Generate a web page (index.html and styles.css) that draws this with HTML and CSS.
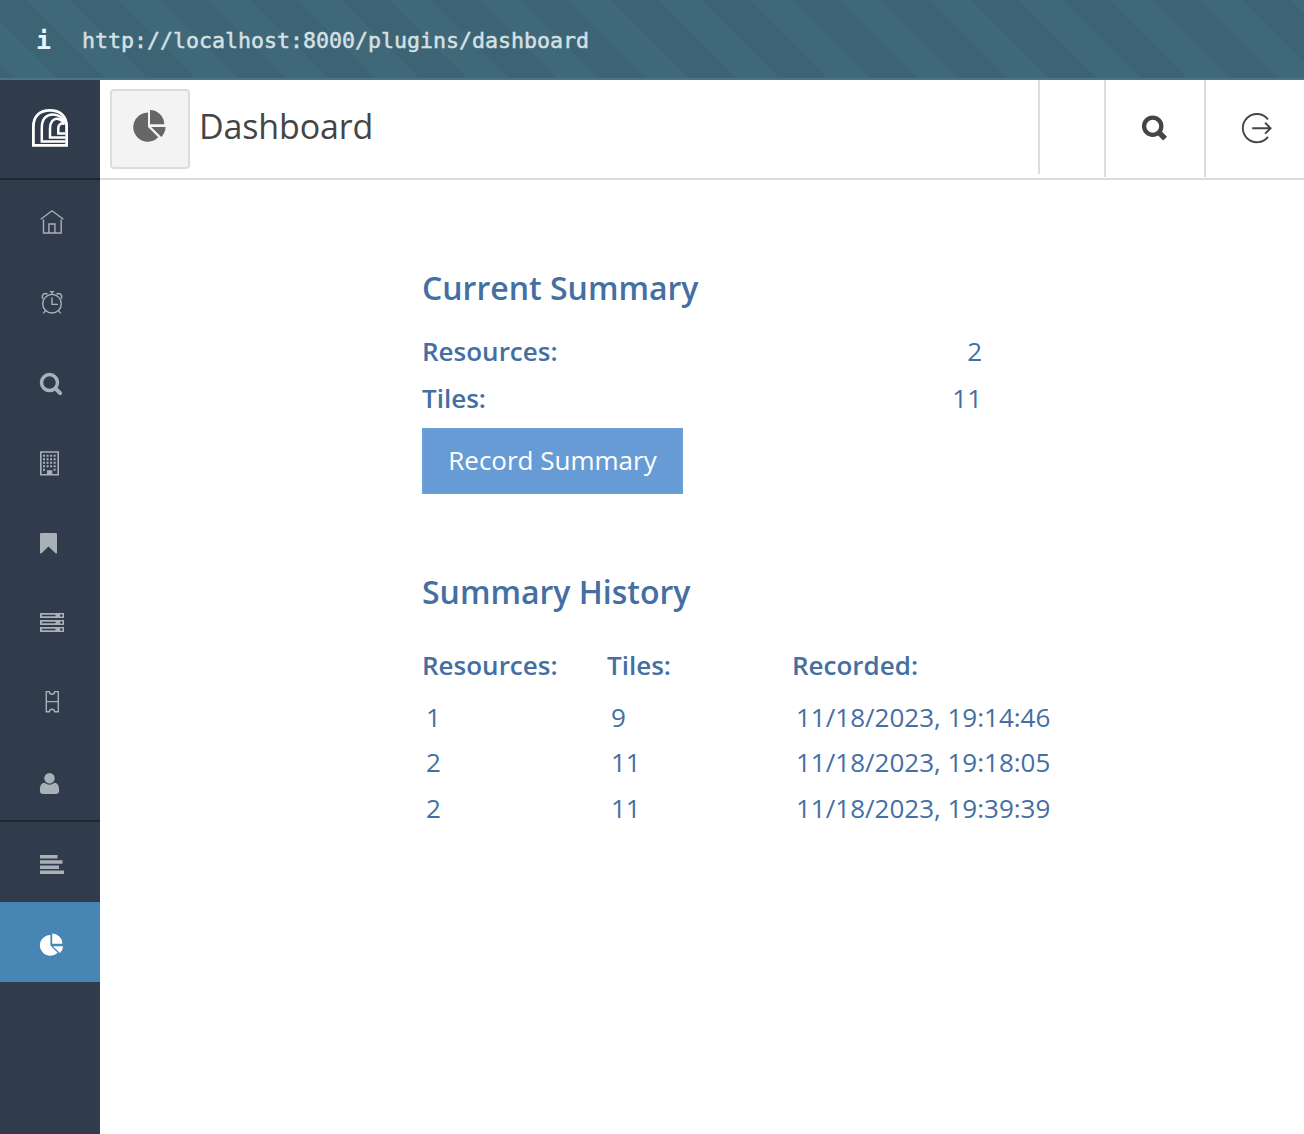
FILE: index.html
```html
<!DOCTYPE html>
<html lang="en">
<head>
<meta charset="utf-8">
<title>Dashboard</title>
<link rel="stylesheet" href="styles.css">
</head>
<body>
<div class="address-bar"><span class="address-info">i</span><span class="address-url">http://localhost:8000/plugins/dashboard</span></div>
<div class="app">
  <aside class="sidebar">
    <a class="logo">
      <svg width="40" height="42" viewBox="0 0 40 42" fill="none" stroke="#fff">
        <path stroke-width="2.8" d="M3.4 38.4V19.500C3.4 9 10 3.4 20 3.4S36.600 9 36.600 19.500V38.4Z"/>
        <path stroke-width="2.5" d="M35 34.600H11.800V20.500C11.800 12 16.500 7.200 23 7.400C28.500 7.600 32.500 10.500 34.800 15"/>
        <path stroke-width="2.5" d="M35 30.500H20V21.500C20 15 23.500 11.500 27 11.700C30.500 12 33 14 34.500 17.500"/>
        <path stroke-width="2.5" d="M35 26.400H28.300V21.500C28.300 18 30 16.200 33.800 16.600"/>
      </svg>
    </a>
    <nav class="nav">
      <a class="nav-item"><svg class="line" viewBox="0 0 32 32"><path d="M6.8 13.3 18 4.800l11.4 8.5M9.5 13.6V27H27.2V13.6M14.9 26.800V18h6v8.800"/></svg></a>
      <a class="nav-item"><svg class="line" viewBox="0 0 32 32"><circle cx="18" cy="17.7" r="9.3"/><path d="M18 11.5V18.4h6M15.8 5.6h4.4M18 5.6v2.7M8.8 13C7.2 8.8 10 6.2 13.7 8.2M27.2 13C28.8 8.8 26 6.2 22.3 8.2M11.6 24.6 9.4 27.2M24.4 24.6l2.2 2.6"/></svg></a>
      <a class="nav-item"><svg viewBox="0 0 32 32" fill="none" stroke="currentColor"><circle cx="15.5" cy="16.6" r="8" stroke-width="3.5"/><path stroke-width="4" stroke-linecap="round" d="m21.5 22.6 4.6 4.6"/></svg></a>
      <a class="nav-item"><svg viewBox="0 0 32 32"><path fill="none" stroke="currentColor" stroke-width="1.6" d="M6.8 6h17.4v22.8H6.8z"/><path fill="none" stroke="currentColor" stroke-width="2" stroke-dasharray="2 1.55" d="M9 9.8h14M9 13.3h14M9 16.8h14M9 20.3h14"/><path fill="currentColor" d="M9 22.8h2v2H9zM19.6 22.8h2v2h-2zM13 24.2h5.3V29H13z"/></svg></a>
      <a class="nav-item"><svg viewBox="0 0 32 32"><path fill="currentColor" d="M7.2 7h14.6Q23 7 23 8.2V27q-.6 1-1.5.2l-7-6.6-7 6.6Q6.6 28 6 27V8.2Q6 7 7.2 7z"/></svg></a>
      <a class="nav-item"><svg viewBox="0 0 32 32"><path fill="currentColor" d="M6 7h24v5H6zM6 14h24v5H6zM6 21h24v5H6z"/><path class="cutout" d="M8 9.5h13.5M8 16.5h13.5M8 23.5h13.5M26 9.5h2.6M26 16.5h2.6M26 23.5h2.6M27.3 8.2v2.6M27.3 15.2v2.6M27.3 22.2v2.6"/></svg></a>
      <a class="nav-item"><svg class="line" viewBox="0 0 32 32"><path d="M12.3 5.6h3q.4 2.6 2.7 2.6t2.7-2.6h3.6v20.2h-3.6Q20.300 23.200 18 23.200T15.300 25.800h-3zM12.300 15.600H24.300"/></svg></a>
      <a class="nav-item"><svg viewBox="0 0 32 32"><circle cx="15.500" cy="12.300" r="5.200" fill="currentColor"/><path fill="currentColor" d="M10.500 16.700Q15.500 20.800 20.500 16.700C24 17 25.100 20 25.100 24.800Q25 28 21.500 28h-12Q6 28 5.900 24.800C5.900 20 7 17 10.500 16.700z"/></svg></a>
      <a class="nav-item nav-item-section"><svg viewBox="0 0 32 32"><path fill="currentColor" d="M6 9h17.500v3.500H6zM6 14.200h22.500v3.500H6zM6 19.400h19v3.500H6zM6 24.500h24V28H6z"/></svg></a>
      <a class="nav-item nav-item-active"><svg viewBox="0 0 32 32"><path fill="currentColor" d="M16.400 9v10.400l7.300 7.300A10.400 10.400 0 1 1 16.400 9zM18.200 7.500A10.200 10.200 0 0 1 28.400 17.700H18.200zM18.900 20.200H29.100Q29 24 26 27.100z"/></svg></a>
    </nav>
  </aside>
  <main class="main">
    <header class="header">
      <div class="title-icon"><svg width="36" height="36" viewBox="0 0 36 36"><path fill="currentColor" d="M16 4.500V19l10.300 10.300A14.600 14.600 0 1 1 16 4.500zM18 2A14.500 14.500 0 0 1 32.300 16.300H18zM19.200 19H33.600Q33.400 24.500 29.300 29.100z"/></svg></div>
      <h1 class="title">Dashboard</h1>
      <div class="header-cell header-cell-blank"></div>
      <div class="header-cell"><svg width="32" height="32" viewBox="0 0 32 32" fill="none" stroke="currentColor"><circle cx="12.700" cy="14.200" r="8.600" stroke-width="4.300"/><path stroke-width="5.400" d="m18.500 20 6.600 6.600"/></svg></div>
      <div class="header-cell"><svg width="32" height="32" viewBox="0 0 32 32" fill="none" stroke="currentColor" stroke-width="1.900"><path d="M28 7.400A14.100 14.100 0 1 0 28 24.800M12.200 16.200H30.500M25.100 10.800 30.600 16.200 25.100 21.600"/></svg></div>
    </header>
    <div class="content">
      <section class="current">
        <h2>Current Summary</h2>
        <dl class="totals">
          <div><dt>Resources:</dt><dd>2</dd></div>
          <div><dt>Tiles:</dt><dd>11</dd></div>
        </dl>
        <button class="record">Record Summary</button>
      </section>
      <section class="history">
        <h2>Summary History</h2>
        <table>
          <thead><tr><th>Resources:</th><th>Tiles:</th><th>Recorded:</th></tr></thead>
          <tbody>
            <tr><td>1</td><td>9</td><td>11/18/2023, 19:14:46</td></tr>
            <tr><td>2</td><td>11</td><td>11/18/2023, 19:18:05</td></tr>
            <tr><td>2</td><td>11</td><td>11/18/2023, 19:39:39</td></tr>
          </tbody>
        </table>
      </section>
    </div>
  </main>
</div>
</body>
</html>
```
FILE: styles.css
```css
* { box-sizing: border-box; }
body {
  margin: 0;
  height: 1134px;
  display: flex;
  flex-direction: column;
  font-family: "Open Sans", "Noto Sans", sans-serif;
  color: #446fa3;
  background: #fff;
  overflow: hidden;
}
svg { display: block; }

.address-bar {
  height: 80px;
  flex: none;
  display: flex;
  align-items: center;
  padding: 4px 0 0 36px;
  border-bottom: 2px solid #4b7389;
  background: repeating-linear-gradient(45deg, #3c6475 0 10.600px, #3f6879 10.600px 40.600px, #3c6475 40.600px 63.800px);
  font: 21.600px/40px "DejaVu Sans Mono", monospace;
  color: #d5e0e5;
}
.address-info { width: 46px; font-weight: 700; font-size: 25px; color: #e8f6fc; }
.address-url { -webkit-text-stroke: .5px currentColor; }

.app { flex: 1; display: flex; }
.sidebar { width: 100px; background: #303c4b; }
.logo {
  height: 100px;
  display: flex;
  justify-content: center;
  padding-top: 27px;
  border-bottom: 2px solid #202730;
}
.nav { padding-top: 2px; }
.nav-item {
  height: 80px;
  display: flex;
  align-items: center;
  justify-content: center;
  color: #aab0b8;
}
.nav-item svg { width: 32px; height: 32px; }
.nav-item .line { fill: none; stroke: currentColor; stroke-width: 1.400; }
.cutout { fill: none; stroke: #303c4b; stroke-width: 1.300; }
.nav-item-section { box-shadow: 0 -2px #202730; }
.nav-item-active { background: #4685b4; color: #fff; }

.main { flex: 1; }
.header {
  height: 100px;
  display: flex;
  padding-left: 10px;
  border-bottom: 2px solid #dcdcdc;
  color: #454545;
}
.title-icon {
  width: 80px;
  height: 80px;
  margin-top: 9px;
  padding: 17px 0 0 20px;
  border: 2px solid #dcdcdc;
  border-radius: 4px;
  background: #f3f3f3;
  color: #666;
}
.title {
  flex: 1;
  margin: 0 0 0 9px;
  font-size: 34px;
  font-weight: 400;
  line-height: 92px;
  letter-spacing: -.15px;
}
.header-cell {
  width: 100px;
  height: 97px;
  padding: 32px 0 0 34px;
  border-left: 2px solid #dcdcdc;
}
.header-cell-blank { width: 66px; height: 94px; }

.content { padding: 86px 0 0 322px; font-size: 26px; }
h2 { margin: 0; font-size: 32px; line-height: 44px; font-weight: 600; }
.totals { width: 560px; margin: 18px 0 0; }
.totals div { display: flex; justify-content: space-between; height: 47px; line-height: 47px; }
dt, th { font-weight: 600; }
dd { margin: 0; }
.record {
  display: block;
  width: 261px;
  height: 66px;
  margin-top: 6px;
  padding: 0 0 2px;
  border: 2px solid #6b9fd9;
  background: #679bd5;
  color: #fff;
  font: 26px/60px "Open Sans", sans-serif;
}
.history { margin-top: 76px; }
table { table-layout: fixed; width: 640px; margin-top: 29px; border-collapse: collapse; }
th, td { padding: 0; height: 45px; line-height: 45px; text-align: left; white-space: nowrap; }
tr:last-child td { height: 46px; line-height: 46px; }
th { width: 185px; height: 52px; padding-bottom: 7px; }
th:last-child { width: 270px; }
td { padding-left: 4px; }
```
